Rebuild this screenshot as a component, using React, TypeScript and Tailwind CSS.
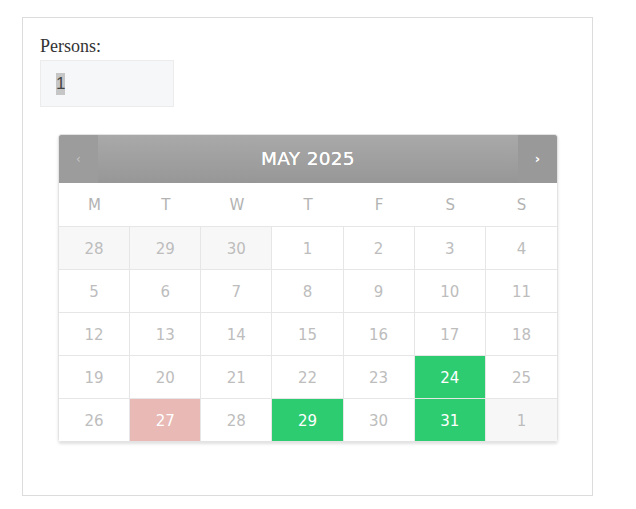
import React from "react";

const weekdays = ["M", "T", "W", "T", "F", "S", "S"];

type Day = { n: number; muted?: boolean; tone?: "green" | "pink" };

const weeks: Day[][] = [
  [{ n: 28, muted: true }, { n: 29, muted: true }, { n: 30, muted: true }, { n: 1 }, { n: 2 }, { n: 3 }, { n: 4 }],
  [{ n: 5 }, { n: 6 }, { n: 7 }, { n: 8 }, { n: 9 }, { n: 10 }, { n: 11 }],
  [{ n: 12 }, { n: 13 }, { n: 14 }, { n: 15 }, { n: 16 }, { n: 17 }, { n: 18 }],
  [{ n: 19 }, { n: 20 }, { n: 21 }, { n: 22 }, { n: 23 }, { n: 24, tone: "green" }, { n: 25 }],
  [{ n: 26 }, { n: 27, tone: "pink" }, { n: 28 }, { n: 29, tone: "green" }, { n: 30 }, { n: 31, tone: "green" }, { n: 1, muted: true }],
];

function cellClass(d: Day) {
  if (d.tone === "green") return "bg-[#2ecc71] text-white";
  if (d.tone === "pink") return "bg-[#e8b9b5] text-white";
  if (d.muted) return "bg-[#f7f7f7] text-[#bdbdbd]";
  return "bg-white text-[#bdbdbd]";
}

export default function App() {
  return (
    <div className="min-h-screen bg-white pt-[17px] pl-[22px]">
      <div className="w-[571px] h-[479px] border border-[#dcdcdc] px-[17px] pt-[17px]">
        <label
          className="block text-[18px] leading-[23px] text-[#333]"
          style={{ fontFamily: '"Liberation Serif", serif' }}
        >
          Persons:
        </label>
        <div
          className="mt-[2px] flex h-[47px] w-[134px] items-center border border-[#ececec] bg-[#f6f7f9] px-[15px] text-[17px] text-[#444]"
          style={{ fontFamily: '"Liberation Sans", Arial, sans-serif' }}
        >
          <span className="bg-[#c6c6c6] leading-[22px]">1</span>
        </div>

        <div
          className="ml-[18px] mt-[27px] w-[500px] rounded-[3px] border border-[#e3e3e3] shadow-[0_2px_3px_rgba(0,0,0,0.12)]"
          style={{ fontFamily: '"DejaVu Sans", Verdana, sans-serif' }}
        >
          <div className="flex h-[48px] rounded-t-[3px] bg-gradient-to-b from-[#a9a9a9] to-[#979797]">
            <button className="flex w-[39px] items-center justify-center rounded-tl-[3px] bg-[#9c9c9c] text-[12px] text-[#c4c4c4]">
              ‹
            </button>
            <div className="flex flex-1 items-center justify-center text-[18.5px] tracking-[0.3px] text-white [text-shadow:0_0_0.4px_#fff]">
              MAY 2025
            </div>
            <button className="flex w-[39px] items-center justify-center rounded-tr-[3px] bg-[#999999] text-[13px] font-bold text-white">
              ›
            </button>
          </div>

          <div className="grid h-[43px] grid-cols-7 bg-white">
            {weekdays.map((w, i) => (
              <div key={i} className="flex items-center justify-center pt-[2px] text-[15px] text-[#b3b3b3]">
                {w}
              </div>
            ))}
          </div>

          {weeks.map((week, wi) => (
            <div key={wi} className="grid h-[43px] grid-cols-7 border-t border-[#e6e6e6]">
              {week.map((d, di) => (
                <div
                  key={di}
                  className={`flex items-center justify-center pt-[3px] text-[15px] ${cellClass(d)} ${
                    di < 6 ? "border-r border-[#e6e6e6]" : ""
                  }`}
                >
                  {d.n}
                </div>
              ))}
            </div>
          ))}
        </div>
      </div>
    </div>
  );
}
